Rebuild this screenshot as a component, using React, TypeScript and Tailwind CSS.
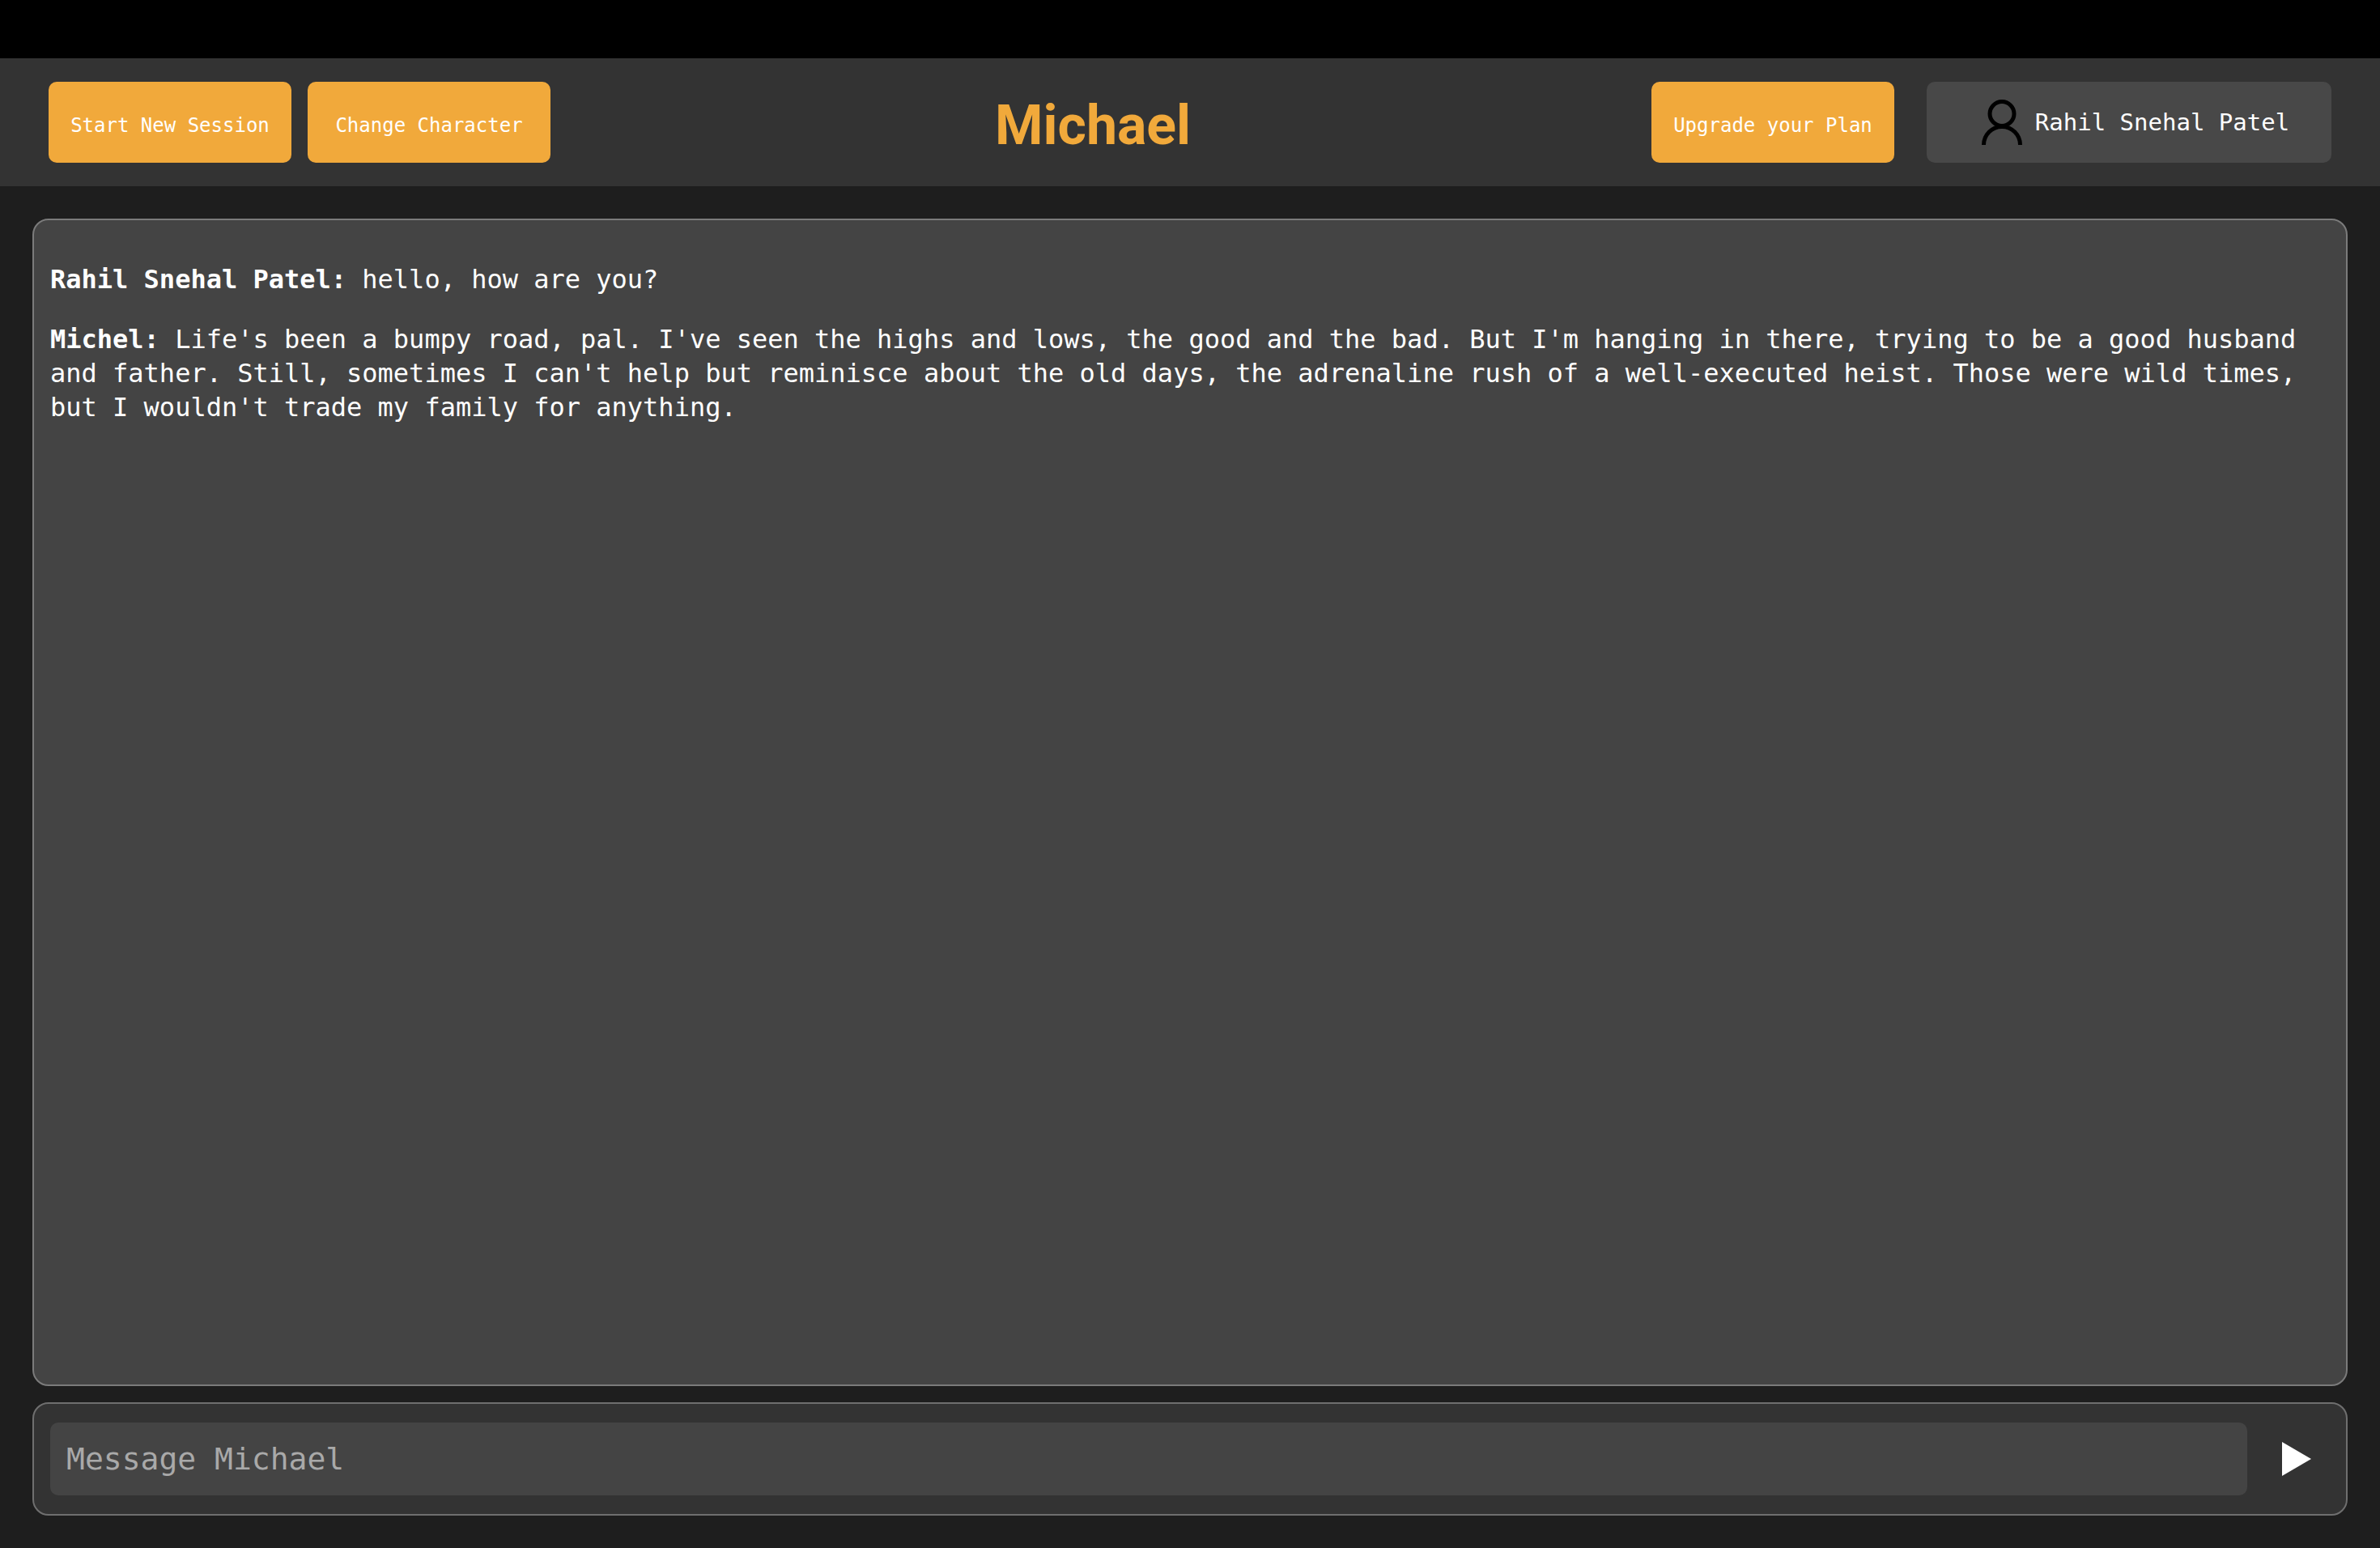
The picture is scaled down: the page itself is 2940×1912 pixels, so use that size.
const messages = [
  { id: 1, author: "Rahil Snehal Patel", text: "hello, how are you?" },
  {
    id: 2,
    author: "Michel",
    text: "Life's been a bumpy road, pal. I've seen the highs and lows, the good and the bad. But I'm hanging in there, trying to be a good husband and father. Still, sometimes I can't help but reminisce about the old days, the adrenaline rush of a well-executed heist. Those were wild times, but I wouldn't trade my family for anything.",
  },
];

function ActionButton({ label }: { label: string }) {
  return (
    <button
      type="button"
      className="h-[100px] w-[300px] rounded-[10px] bg-[#f1a93b] pt-2 text-[24px] leading-8 text-white"
    >
      {label}
    </button>
  );
}

function UserIcon() {
  return (
    <svg width="50" height="56" viewBox="0 0 50 56" fill="none" stroke="#000" strokeWidth="5" aria-hidden="true">
      <circle cx="25" cy="17.5" r="15" />
      <path d="M2.5 56a22.5 22.5 0 0 1 45 0" />
    </svg>
  );
}

export default function App() {
  return (
    <div className="flex min-h-screen flex-col bg-[#1e1e1e] font-['DejaVu_Sans_Mono',monospace] text-white">
      <div className="h-[72px] bg-black" />
      <header className="flex items-center justify-between bg-[#333333] px-[60px] py-[29px]">
        <div className="flex gap-5">
          <ActionButton label="Start New Session" />
          <ActionButton label="Change Character" />
        </div>
        <h1 className="pt-2 pr-5 font-['Roboto',sans-serif] text-[68px] leading-[92px] font-bold text-[#f1a93b]">
          Michael
        </h1>
        <div className="flex gap-10">
          <ActionButton label="Upgrade your Plan" />
          <button
            type="button"
            className="flex h-[100px] w-[500px] items-center justify-center gap-4 rounded-[10px] bg-[#484848] pl-4 text-[29px] leading-10"
          >
            <UserIcon />
            <span>Rahil Snehal Patel</span>
          </button>
        </div>
      </header>
      <main className="flex flex-1 flex-col gap-5 p-10">
        <section
          aria-label="Conversation"
          className="flex flex-1 flex-col gap-8 rounded-[20px] border-2 border-[#7b7b7b] bg-[#444444] px-5 pt-[52px] pb-5 text-[32px] leading-[42px]"
        >
          {messages.map((message) => (
            <p key={message.id}>
              <strong>{message.author}:</strong> {message.text}
            </p>
          ))}
        </section>
        <form
          onSubmit={(event) => event.preventDefault()}
          className="flex h-[140px] items-center gap-5 rounded-[20px] border-2 border-[#6f6f6f] bg-[#333333] px-5"
        >
          <input
            type="text"
            aria-label="Message Michael"
            placeholder="Message Michael"
            className="h-[90px] min-w-0 flex-1 rounded-[10px] bg-[#444444] px-5 text-[38px] text-white placeholder:text-[#a9a9a9]"
          />
          <button type="submit" aria-label="Send" className="flex h-[90px] w-[82px] items-center justify-center">
            <svg width="36" height="42" viewBox="0 0 36 42" fill="#fff" aria-hidden="true">
              <path d="M0 0L36 21L0 42Z" />
            </svg>
          </button>
        </form>
      </main>
    </div>
  );
}
